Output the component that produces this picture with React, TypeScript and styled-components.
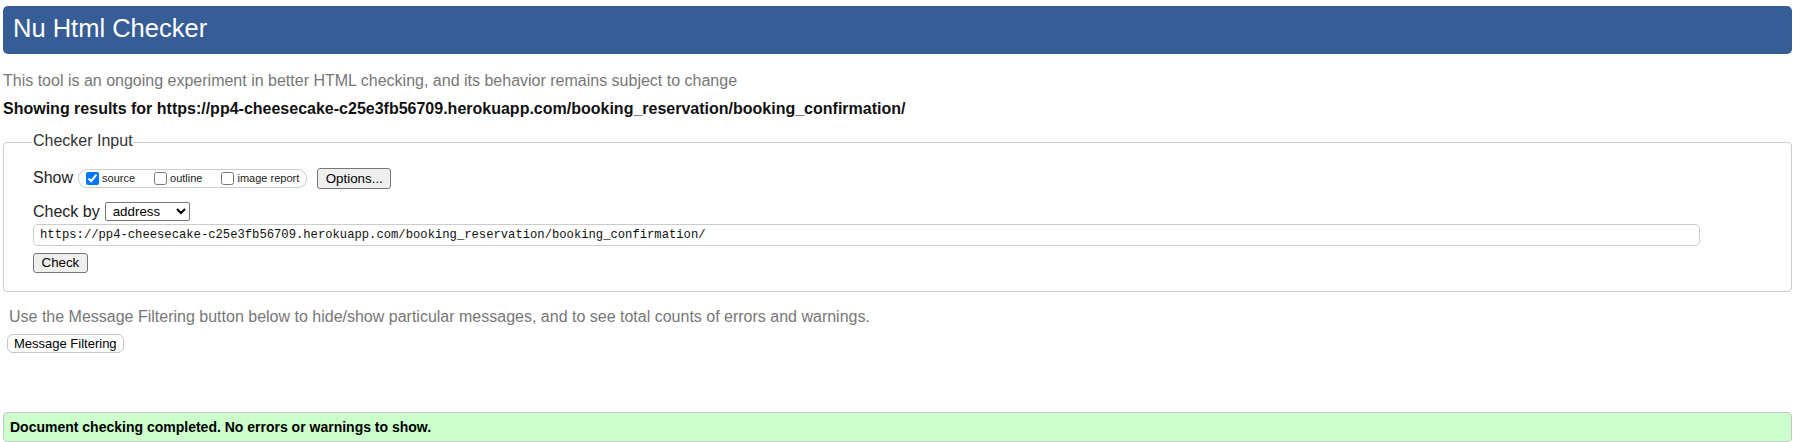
import styled, { createGlobalStyle } from 'styled-components';

// --- GLOBAL ---
const GlobalStyle = createGlobalStyle`
  html, body {
    margin: 0;
    padding: 0;
    background: #fff;
  }
  body {
    font-family: 'Liberation Sans', Arial, sans-serif;
    color: #222;
  }
`;

// --- STYLED COMPONENTS ---
const Page = styled.div`
  padding: 0 7px 0 3px;
`;

const Header = styled.h1`
  margin: 6px 0 0;
  height: 48px;
  box-sizing: border-box;
  padding: 2px 10px 6px;
  line-height: 40px;
  font-size: 25.5px;
  font-weight: normal;
  color: #fff;
  background: #365d95;
  border-radius: 5px;
`;

const Note = styled.p<{ $indent?: number; $top: number }>`
  margin: ${p => p.$top}px 0 0 ${p => p.$indent ?? 0}px;
  font-size: 16px;
  line-height: 20px;
  color: #777;
`;

const ResultsFor = styled.p`
  margin: 8px 0 0;
  font-size: 16px;
  line-height: 20px;
  font-weight: bold;
  color: #111;
`;

const InputFieldset = styled.fieldset`
  margin: 11.5px 0 0;
  padding: 14px 29px 18px 29px;
  border: 1px solid #ccc;
  border-radius: 4px;
  min-width: 0;
`;

const Legend = styled.legend`
  margin-left: -1px;
  padding: 0 1px 3px;
  font-size: 16px;
  line-height: 20px;
  color: #333;
`;

const Row = styled.div<{ $top?: number }>`
  display: flex;
  align-items: center;
  margin-top: ${p => p.$top ?? 0}px;
  font-size: 16px;
  line-height: 20px;
  color: #222;
`;

const RowLabel = styled.span`
  margin-right: 5px;
`;

const ShowGroup = styled.div`
  display: flex;
  align-items: center;
  gap: 19px;
  height: 19px;
  box-sizing: border-box;
  padding: 0 7px;
  border: 1px solid #ccc;
  border-radius: 9px;
  margin-right: 10px;
`;

const ShowOption = styled.label`
  display: flex;
  align-items: center;
  font-size: 11px;
  line-height: 13px;
  color: #222;
`;

const Check = styled.input`
  width: 13px;
  height: 13px;
  margin: 0 3px 0 0;
`;

const Button = styled.button<{ $soft?: boolean; $h: number }>`
  height: ${p => p.$h}px;
  box-sizing: border-box;
  padding: 0 ${p => (p.$soft ? 6 : 7.5)}px;
  font-family: 'Liberation Sans', Arial, sans-serif;
  font-size: ${p => (p.$soft ? 13 : 13.33)}px;
  color: #000;
  background: ${p => (p.$soft ? '#fff' : '#efefef')};
  border: 1px solid ${p => (p.$soft ? '#c4c4c4' : '#767676')};
  border-radius: ${p => (p.$soft ? 6 : 3)}px;
`;

const Select = styled.select`
  width: 85px;
  height: 19px;
  box-sizing: border-box;
  padding: 0 0 0 3px;
  font-family: 'Liberation Sans', Arial, sans-serif;
  font-size: 13.33px;
  color: #000;
  background: #fff;
  border: 1px solid #767676;
  border-radius: 2px;
`;

const UrlInput = styled.input`
  display: block;
  width: calc(100% - 62px);
  height: 22px;
  box-sizing: border-box;
  margin-top: 2px;
  padding: 0 6px;
  font-family: 'Liberation Mono', 'Courier New', monospace;
  font-size: 12.2px;
  color: #111;
  border: 1px solid #ccc;
  border-radius: 5px;
  outline: none;
`;

const SubmitRow = styled.div`
  margin-top: 7px;
  display: flex;
`;

const FilterRow = styled.div`
  margin: 7.5px 0 0 4px;
  display: flex;
`;

const SuccessBar = styled.div`
  margin-top: 59px;
  height: 30px;
  box-sizing: border-box;
  padding: 0 6px;
  display: flex;
  align-items: center;
  font-size: 14px;
  line-height: 18px;
  font-weight: bold;
  color: #000;
  background: #ccffcc;
  border: 1px solid #c8c8c8;
  border-radius: 4px;
`;

const checkedUrl =
  'https://pp4-cheesecake-c25e3fb56709.herokuapp.com/booking_reservation/booking_confirmation/';

export default function App() {
  return (
    <>
      <GlobalStyle />
      <Page>
        <Header>Nu Html Checker</Header>
        <Note $top={17}>
          This tool is an ongoing experiment in better HTML checking, and its behavior remains subject to change
        </Note>
        <ResultsFor>Showing results for {checkedUrl}</ResultsFor>

        <InputFieldset>
          <Legend>Checker Input</Legend>

          <Row style={{ height: 21 }}>
            <RowLabel>Show</RowLabel>
            <ShowGroup>
              <ShowOption>
                <Check type="checkbox" defaultChecked />
                source
              </ShowOption>
              <ShowOption>
                <Check type="checkbox" />
                outline
              </ShowOption>
              <ShowOption>
                <Check type="checkbox" />
                image report
              </ShowOption>
            </ShowGroup>
            <Button $h={21}>Options...</Button>
          </Row>

          <Row $top={13}>
            <RowLabel>Check by</RowLabel>
            <Select defaultValue="address">
              <option value="address">address</option>
              <option value="file">file upload</option>
              <option value="text">text input</option>
            </Select>
          </Row>

          <UrlInput type="url" defaultValue={checkedUrl} />

          <SubmitRow>
            <Button $h={20}>Check</Button>
          </SubmitRow>
        </InputFieldset>

        <Note $top={15} $indent={6}>
          Use the Message Filtering button below to hide/show particular messages, and to see total counts of errors and warnings.
        </Note>
        <FilterRow>
          <Button $soft $h={19}>Message Filtering</Button>
        </FilterRow>

        <SuccessBar>Document checking completed. No errors or warnings to show.</SuccessBar>
      </Page>
    </>
  );
}
